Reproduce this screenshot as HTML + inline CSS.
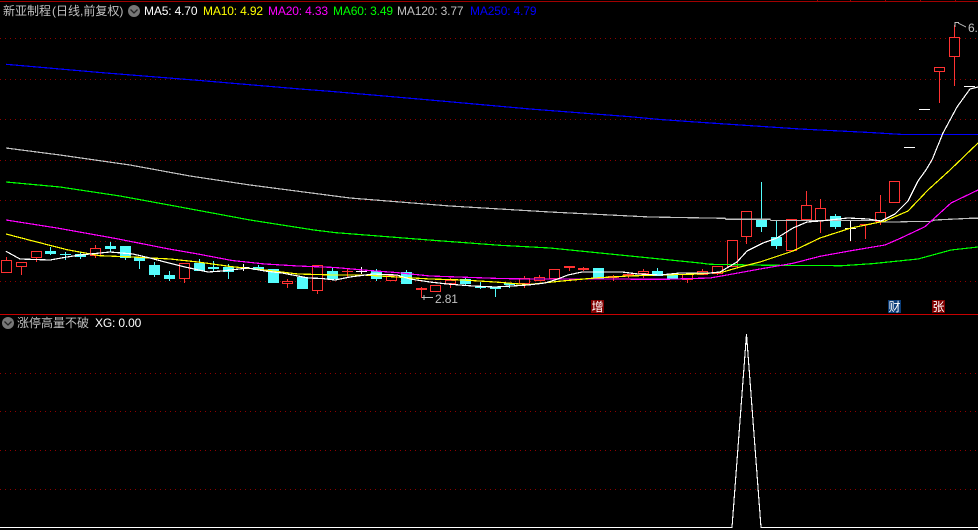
<!DOCTYPE html>
<html><head><meta charset="utf-8"><style>
html,body{margin:0;padding:0;background:#000;width:978px;height:530px;overflow:hidden}
svg{position:absolute;left:0;top:0}
.t{position:absolute;font:12px/14px "Liberation Sans",sans-serif;white-space:pre;letter-spacing:-.15px}
.c{font-family:"Liberation Sans","WenQuanYi Zen Hei","Noto Sans CJK SC",sans-serif;color:#c0c0c0;letter-spacing:0}
.b{position:absolute;top:300px;width:13px;height:13px;color:#fff;text-align:center;font:12px/13px "WenQuanYi Zen Hei","Noto Sans CJK SC",sans-serif}
</style></head><body>
<svg width="978" height="530" viewBox="0 0 978 530" shape-rendering="crispEdges">
<rect x="0" y="1" width="978" height="1" fill="#a00000"/>
<path d="M817 0.500h1M850 0.500h1M885 0.500h1M920 0.500h1M955 0.500h1" stroke="#a00000"/>
<g stroke="#900000" stroke-dasharray="1 4" fill="none">
<path d="M0 38.500H978M0 79.500H978M0 119.500H978M0 160.500H978M0 200.500H978M0 241.500H978M0 281.500H978M0 373.500H978M0 411.500H978M0 450.500H978M0 489.500H978"/>
</g>
<rect x="0" y="314" width="978" height="1" fill="#c80000"/>
<!-- red wicks -->
<path stroke="#ff3232" fill="none" d="M6.500 257V260M21.500 267V275M36.500 258V262M95.500 245V258M184.500 279V283M317.500 291V294M287.500 279V288M347.500 268V277M450.500 278V288M421.500 287V298M524.500 276V288M539.500 275V278M569.500 266V271M583.500 267V271M613.500 275V281M628.500 274V278M643.500 269V278M687.500 280V283M702.500 269V272M717.500 274V275M746.500 237V244M806.500 191V206M820.500 199V233M865.500 224V239M880.500 195V225M939.500 71V103M954.500 25V86"/>
<!-- hollow red -->
<g fill="#000" stroke="#ff3232">
<rect x="1.500" y="260.500" width="10" height="12"/>
<rect x="16.500" y="262.500" width="10" height="4"/>
<rect x="31.500" y="251.500" width="10" height="6"/>
<rect x="90.500" y="248.500" width="10" height="7"/>
<rect x="179.500" y="263.500" width="10" height="15"/>
<rect x="282.500" y="281.500" width="10" height="2"/>
<rect x="312.500" y="265.500" width="10" height="25"/>
<rect x="386.500" y="275.500" width="10" height="5"/>
<rect x="430.500" y="285.500" width="10" height="6"/>
<rect x="445.500" y="280.500" width="10" height="3"/>
<rect x="519.500" y="278.500" width="10" height="5"/>
<rect x="534.500" y="277.500" width="10" height="3"/>
<rect x="549.500" y="269.500" width="10" height="9"/>
<rect x="638.500" y="271.500" width="10" height="2"/>
<rect x="682.500" y="274.500" width="10" height="5"/>
<rect x="697.500" y="271.500" width="10" height="3"/>
<rect x="712.500" y="266.500" width="10" height="7"/>
<rect x="727.500" y="240.500" width="10" height="26"/>
<rect x="741.500" y="211.500" width="10" height="25"/>
<rect x="786.500" y="219.500" width="10" height="31"/>
<rect x="801.500" y="205.500" width="10" height="14"/>
<rect x="815.500" y="208.500" width="10" height="12"/>
<rect x="875.500" y="212.500" width="10" height="9"/>
<rect x="889.500" y="181.500" width="10" height="21"/>
<rect x="934.500" y="67.500" width="10" height="4"/>
<rect x="949.500" y="37.500" width="10" height="19"/>
</g>
<!-- filled red -->
<g fill="#ff3232">
<rect x="342" y="271" width="11" height="1"/>
<rect x="416" y="288" width="11" height="2"/>
<rect x="564" y="266" width="11" height="2"/>
<rect x="578" y="268" width="11" height="2"/>
<rect x="608" y="276" width="11" height="2"/>
<rect x="623" y="274" width="11" height="2"/>
<rect x="860" y="224" width="11" height="1"/>
</g>
<!-- cyan wicks -->
<path stroke="#54fcfc" fill="none" d="M50.500 247V255M65.500 252V260M80.500 252V259M110.500 242V252M125.500 246V260M139.500 257V269M154.500 262V277M169.500 271V281M199.500 259V263M213.500 261V272M228.500 264V279M258.500 265V267M332.500 268V271M376.500 269V281M406.500 270V273M465.500 277V286M480.500 282V289M495.500 287V297M509.500 283V288M657.500 268V271M672.500 273V275M761.500 182V232M776.500 221V249M835.500 214V229"/>
<!-- cyan bodies -->
<g fill="#54fcfc">
<rect x="45" y="251" width="11" height="3"/>
<rect x="60" y="254" width="11" height="1"/>
<rect x="75" y="254" width="11" height="3"/>
<rect x="105" y="246" width="11" height="3"/>
<rect x="120" y="246" width="11" height="12"/>
<rect x="134" y="257" width="11" height="4"/>
<rect x="149" y="265" width="11" height="10"/>
<rect x="164" y="275" width="11" height="4"/>
<rect x="194" y="263" width="11" height="8"/>
<rect x="208" y="267" width="11" height="2"/>
<rect x="223" y="267" width="11" height="5"/>
<rect x="253" y="267" width="11" height="3"/>
<rect x="268" y="269" width="11" height="14"/>
<rect x="297" y="277" width="11" height="12"/>
<rect x="327" y="271" width="11" height="8"/>
<rect x="371" y="271" width="11" height="8"/>
<rect x="401" y="272" width="11" height="12"/>
<rect x="460" y="279" width="11" height="5"/>
<rect x="475" y="286" width="11" height="2"/>
<rect x="490" y="287" width="11" height="2"/>
<rect x="504" y="283" width="11" height="2"/>
<rect x="593" y="268" width="11" height="11"/>
<rect x="652" y="271" width="11" height="5"/>
<rect x="667" y="275" width="11" height="4"/>
<rect x="756" y="220" width="11" height="7"/>
<rect x="771" y="237" width="11" height="9"/>
<rect x="830" y="216" width="11" height="11"/>
</g>
<!-- white doji -->
<path stroke="#fff" fill="none" d="M361.500 267V274M356 271.500H367M243.500 264V271M238 267.500H249M850.500 220V241M845 228.500H856M904 147.500H915M919 109.500H930M964 86.500H975"/>
<!-- MA lines -->
<g fill="none" stroke-width="1.2">
<polyline stroke="#0000ff" points="6,64.300 100,72.500 200,80.500 300,89 330,91.300 430,100 530,109 630,116.700 660,119.500 700,122.300 800,129 870,132.500 903,134.500 978,134.500"/>
<polyline stroke="#c0c0c0" points="6,148 60,155 130,165 190,176 250,185 350,198 450,206 550,212 650,217 725,218.300 726,219.300 770,219.300 771,220.600 880,220.600 881,222 900,222 901,221.700 930,221.500 935,220 970,218.300 978,218.300"/>
<polyline stroke="#00ff00" points="6,182 60,187 120,196 180,207 250,220 314,230 335,232.600 429,240 500,245.300 550,248 600,253 660,259 700,263 710,264.300 770,265.300 842,265.700 872,263.700 918,259 951,250 978,247"/>
<polyline stroke="#ff00ff" points="6,220 57,228 113,238 169,249 198,254 232,260.500 265,264 298,266 335,267.500 363,270 397,272.600 430,276 500,278.500 529,279 595,279 665,279.300 710,278 727,275 760,269 793,263.300 820,256.300 851,250.700 885,245 901,238 925,226.700 951,203 978,190"/>
<polyline stroke="#ffff00" points="6,234 33,241 67,249.700 100,255.700 133,257 170,259 198,262 232,266.700 265,270 298,274 335,275 363,275 397,277 430,279 463,280 495,282 528,284.600 562,281 595,278 628,276 660,275 700,274 723,272 740,267 760,262 793,251 820,238 851,228 885,221 908,211 928,190 950,170 978,143"/>
<polyline stroke="#ffffff" points="6,251.300 20,259 50,260 67,257 80,255 110,252 133,254 150,258 165,262 185,267 208,272 222,271 248,268 265,271 282,273 298,276 308,278 322,278.500 335,280 350,277 373,274 397,275 410,279 430,282 447,284 473,286 495,287 528,285 545,283 558,279 568,275 582,272 622,272 638,274 660,275 680,273 710,273 720,272 737,262 747,251 763,243 777,238 793,228 807,222 820,221 848,218 868,219 881,221 895,214 908,201 918,181 926,170 932,160 943,133 957,107 970,89 978,87"/>
</g>
<!-- price marks -->
<path stroke="#c0c0c0" fill="none" d="M422 297.500H433M424 295V300M955 22V27M955.500 22.500H959M958 23L966 27"/>
<!-- lower -->
<polyline fill="none" stroke="#fff" stroke-width="1.100" points="0,527.500 732,527.500 746.500,334 761,527.500 978,527.500"/>
<!-- badges bg -->
<rect x="591" y="300" width="13" height="13" fill="#800000"/>
<rect x="888" y="300" width="13" height="13" fill="#0a3c78"/>
<rect x="932" y="300" width="13" height="13" fill="#800000"/>
</svg>
<svg width="978" height="530" viewBox="0 0 978 530">
<circle cx="134" cy="11" r="6" fill="#777"/>
<path d="M130.500 9.500L134 13L137.500 9.500" fill="none" stroke="#222" stroke-width="1.300"/>
<circle cx="8" cy="323" r="6" fill="#777"/>
<path d="M4.500 321.500L8 325L11.500 321.500" fill="none" stroke="#222" stroke-width="1.300"/>
</svg>
<div class="t c" style="left:3px;top:4px">新亚制程</div>
<div class="t c" style="left:52px;top:4px">(日线,前复权)</div>
<div class="t" style="left:144px;top:4px;color:#fff">MA5: 4.70</div>
<div class="t" style="left:203px;top:4px;color:#ff0">MA10: 4.92</div>
<div class="t" style="left:268px;top:4px;color:#f0f">MA20: 4.33</div>
<div class="t" style="left:333px;top:4px;color:#0f0">MA60: 3.49</div>
<div class="t" style="left:397px;top:4px;color:#c0c0c0">MA120: 3.77</div>
<div class="t" style="left:470px;top:4px;color:#00f">MA250: 4.79</div>
<div class="t c" style="left:17px;top:316px">涨停高量不破</div>
<div class="t" style="left:95px;top:316px;color:#fff">XG: 0.00</div>
<div class="t" style="left:435px;top:292px;color:#c0c0c0">2.81</div>
<div class="t" style="left:968px;top:21px;color:#c0c0c0">6.</div>
<div class="b" style="left:591px">增</div>
<div class="b" style="left:888px">财</div>
<div class="b" style="left:932px">张</div>
</body></html>
